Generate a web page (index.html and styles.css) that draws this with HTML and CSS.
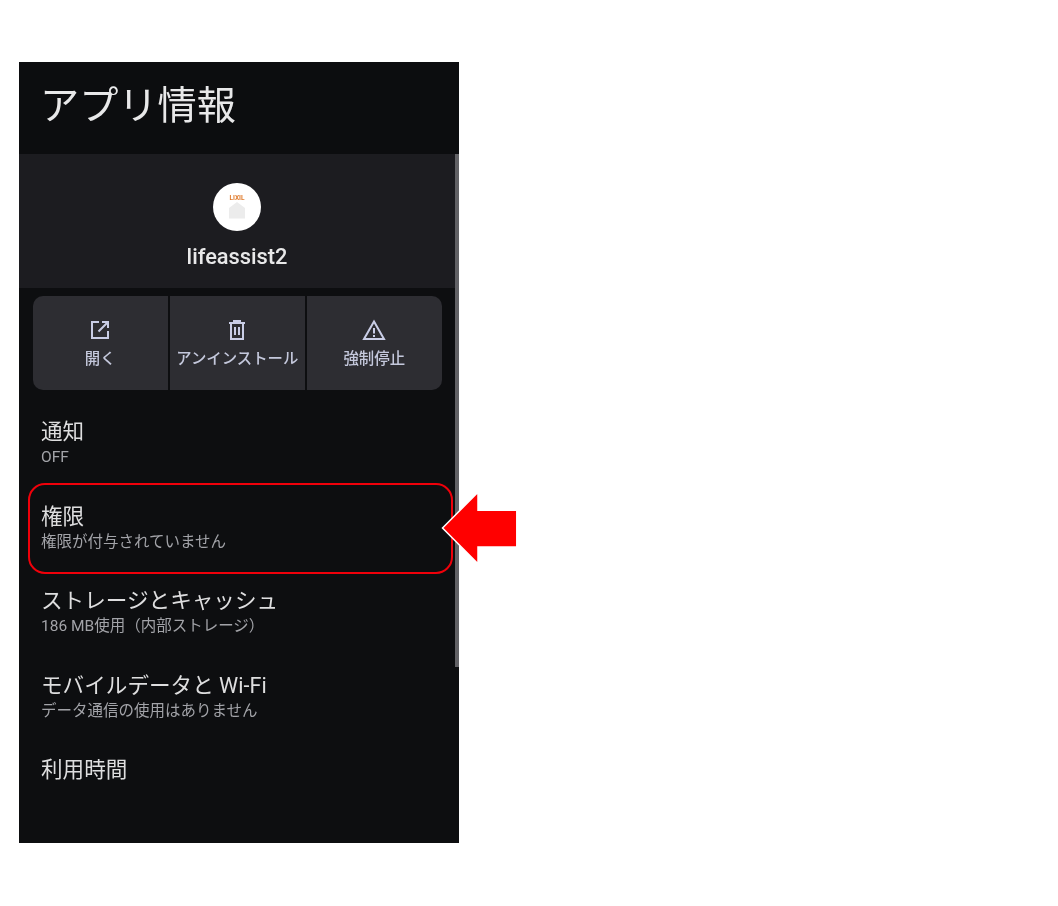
FILE: index.html
```html
<!DOCTYPE html>
<html lang="ja">
<head>
<meta charset="utf-8">
<title>アプリ情報</title>
<link rel="stylesheet" href="styles.css">
</head>
<body>
<main class="phone">
  <header class="appbar"><h1 class="appbar-title">アプリ情報</h1></header>
  <section class="hero">
    <div class="app-icon">
      <svg viewBox="0 0 48 48" width="48" height="48" aria-hidden="true">
        <circle cx="24" cy="24" r="24" fill="#fff"/>
        <text x="24" y="17" class="logo-text" text-anchor="middle">LIXIL</text>
        <path d="M16 25 24 19 32 25V35.5H16Z" fill="#ececec"/>
      </svg>
    </div>
    <div class="app-name">lifeassist2</div>
  </section>
  <section class="actions">
    <div class="action">
      <svg class="action-icon" viewBox="0 0 24 24" aria-hidden="true"><path d="M11 4H4V20H20V13M14 4H20V10M20 4 10.5 13.5" fill="none" stroke="#c9cde6" stroke-width="2"/></svg>
      <span class="action-label">開く</span>
    </div>
    <div class="action">
      <svg class="action-icon" viewBox="0 0 24 24" aria-hidden="true"><path d="M4 5H20M9 5V3H15V5M6 5V21H18V5M10 9V17M14 9V17" fill="none" stroke="#c9cde6" stroke-width="2"/></svg>
      <span class="action-label">アンインストール</span>
    </div>
    <div class="action">
      <svg class="action-icon" viewBox="0 0 24 24" aria-hidden="true"><path d="M12 3.5 22 21H2ZM12 10V15.5M12 17V19" fill="none" stroke="#c9cde6" stroke-width="2"/></svg>
      <span class="action-label">強制停止</span>
    </div>
  </section>
  <ul class="list">
    <li class="row"><div class="row-title">通知</div><div class="row-sub">OFF</div></li>
    <li class="row"><div class="row-title">権限</div><div class="row-sub">権限が付与されていません</div></li>
    <li class="row"><div class="row-title">ストレージとキャッシュ</div><div class="row-sub">186 MB使用（内部ストレージ）</div></li>
    <li class="row"><div class="row-title">モバイルデータと Wi-Fi</div><div class="row-sub">データ通信の使用はありません</div></li>
    <li class="row"><div class="row-title">利用時間</div></li>
    <li class="row row-clipped"><div class="row-title">バッテリー</div></li>
  </ul>
  <div class="scrollbar"></div>
  <div class="highlight"></div>
</main>
<svg class="arrow" viewBox="0 0 76 74" width="76" height="74" aria-hidden="true">
  <path d="M1.5 37 37 1.200V19.200H75.800V56H37V72.800Z" fill="#ff0000" stroke="#fff" stroke-width="1.5"/>
</svg>
</body>
</html>
```
FILE: styles.css
```css
* { box-sizing: border-box; }
html, body { margin: 0; background: #fff; }
body {
  height: 906px;
  padding: 62px 0 0 19px;
  overflow: hidden;
  position: relative;
  font-family: Roboto, "Noto Sans CJK JP", sans-serif;
}
.phone {
  position: relative;
  width: 440px;
  height: 781px;
  background: #0d0e10;
  overflow: hidden;
  color: #e6e6e8;
}
.appbar, .hero, .actions, .list { filter: blur(0.4px); }
.appbar { height: 92px; padding: 17px 0 0 21px; background: #0c0d0f; }
.appbar-title {
  margin: 0;
  font-size: 39.2px;
  line-height: 54px;
  font-weight: 400;
  color: #e8e8e9;
}
.hero {
  height: 134px;
  background: #1c1c20;
  display: flex;
  flex-direction: column;
  align-items: center;
  padding: 29px 4px 0 0;
}
.app-icon { width: 48px; height: 48px; }
.app-icon svg { display: block; }
.logo-text { font: 700 6.5px Roboto, sans-serif; fill: #e07b2c; }
.app-name {
  margin-top: 12px;
  font-size: 21.8px;
  line-height: 28px;
  font-weight: 500;
  color: #e8e8e9;
}
.actions {
  display: flex;
  gap: 1.5px;
  width: 409.5px;
  height: 94px;
  margin: 8px 0 0 13.5px;
  border-radius: 10px;
  overflow: hidden;
}
.action {
  flex: 1;
  background: #2d2d32;
  display: flex;
  flex-direction: column;
  align-items: center;
  padding-top: 22px;
}
.action-icon { width: 24px; height: 24px; display: block; }
.action-label {
  margin-top: 4px;
  font-family: "Noto Sans CJK JP", sans-serif;
  font-size: 15.4px;
  line-height: 22px;
  font-weight: 500;
  color: #c4c8dc;
  white-space: nowrap;
}
.list { list-style: none; margin: 0; padding: 0 0 0 22px; }
.row { height: 84.5px; padding-top: 26px; }
.row-clipped { padding-top: 25px; }
.row-title { font-size: 21.6px; line-height: 31px; color: #dededf; }
.row-sub { font-size: 15.5px; line-height: 19px; margin-top: 1px; color: #a2a3a8; white-space: nowrap; }
.scrollbar {
  position: absolute;
  top: 92px;
  right: 0;
  width: 4px;
  height: 513px;
  background: #626266;
}
.highlight {
  position: absolute;
  left: 9px;
  top: 421px;
  width: 424.5px;
  height: 91px;
  border: 2px solid #f0000a;
  border-radius: 17px;
}
.arrow { position: absolute; left: 441px; top: 491px; }
```
